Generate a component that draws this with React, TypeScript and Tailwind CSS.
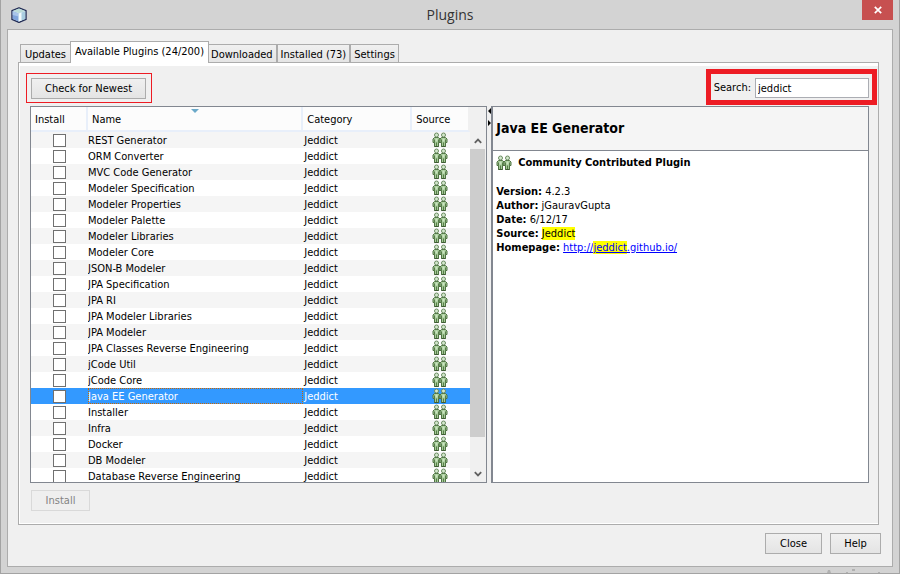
import React, { useState } from 'react';

const plugins = [
  'REST Generator',
  'ORM Converter',
  'MVC Code Generator',
  'Modeler Specification',
  'Modeler Properties',
  'Modeler Palette',
  'Modeler Libraries',
  'Modeler Core',
  'JSON-B Modeler',
  'JPA Specification',
  'JPA RI',
  'JPA Modeler Libraries',
  'JPA Modeler',
  'JPA Classes Reverse Engineering',
  'jCode Util',
  'jCode Core',
  'Java EE Generator',
  'Installer',
  'Infra',
  'Docker',
  'DB Modeler',
  'Database Reverse Engineering',
];

const details = [
  { label: 'Version:', value: '4.2.3' },
  { label: 'Author:', value: 'jGauravGupta' },
  { label: 'Date:', value: '6/12/17' },
];

const buttonStyle =
  'border border-[#acacac] bg-linear-to-b from-[#f0f0f0] to-[#e4e4e4] text-center leading-4';

function Person({ x }: { x: number }) {
  return (
    <g transform={`translate(${x} 0)`}>
      <path
        d="M2.500 5.500h4l1.500 1.500v3.500h-1.500v4h-4v-4H1V7z"
        fill="#a3c996"
        stroke="#4f7342"
        strokeWidth="1"
        strokeLinejoin="round"
      />
      <path d="M3.500 6.500h2v3h-2z" fill="#cbe4c1" />
      <path d="M2.500 7.500v3M6.500 7.500v3M4.500 10.500v4" stroke="#4f7342" strokeWidth="0.9" />
      <circle cx="4.500" cy="3" r="2" fill="#d3e8cd" stroke="#6c8c62" strokeWidth="1" />
      <path d="M2.500 14.500h4" stroke="#3f5c34" strokeWidth="1" />
    </g>
  );
}

function CommunityIcon() {
  return (
    <svg viewBox="0 0 16 16" className="block size-4 shrink-0" aria-hidden="true">
      <Person x={0} />
      <Person x={7} />
    </svg>
  );
}

function CubeIcon() {
  return (
    <svg viewBox="0 0 16 16" className="size-4" aria-hidden="true">
      <path d="M8 .8 15 3.600v8.800L8 15.400 1 12.400V3.600z" fill="#dcecf4" stroke="#232c55" strokeWidth="1.400" strokeLinejoin="round" />
      <path d="M8 1.500 14.200 3.900 8 6.300 1.800 3.900z" fill="#bcdcd8" />
      <path d="M1.700 4.200 7.700 6.500v8L1.700 12z" fill="#7fa4dc" />
      <path d="M1.700 4.200 7.700 6.500v3L1.700 8z" fill="#a9c5ea" />
      <path d="M7.700 6.500 14.300 4.200V12l-6.600 2.500z" fill="#a9cde0" />
      <path d="M7.700 6.500 10.500 5.500v8l-2.800 1z" fill="#f2fafc" />
    </svg>
  );
}

function Tab({ children, className }: { children: React.ReactNode; className: string }) {
  return (
    <button
      role="tab"
      aria-selected="false"
      className={`h-[18px] border border-b-0 border-[#acacac] bg-linear-to-b from-[#f0f0f0] to-[#e5e5e5] pt-0.5 leading-4 whitespace-nowrap ${className}`}
    >
      {children}
    </button>
  );
}

export default function App() {
  const [query, setQuery] = useState('jeddict');

  return (
    <div className="relative flex h-screen flex-col overflow-hidden border border-t-0 border-[#a3a3a3] bg-[#d3d3d3] px-1.5 pb-1.5 font-['DejaVu_Sans_Condensed','DejaVu_Sans',sans-serif] text-[11px] text-black">
      <header className="grid h-[29px] shrink-0 grid-cols-[1fr_auto_1fr] items-center">
        <span className="pl-1">
          <CubeIcon />
        </span>
        <h1 className="font-['Open_Sans',sans-serif] text-[14px] leading-5 text-[#333]">Plugins</h1>
        <button
          aria-label="Close window"
          className="flex h-5 w-[31px] items-center justify-center self-start justify-self-end bg-[#c75050]"
        >
          <svg viewBox="0 0 8 8" className="size-2" aria-hidden="true">
            <path d="M.8.8l6.400 6.400M7.200.8.8 7.200" stroke="#fff" strokeWidth="1.700" />
          </svg>
        </button>
      </header>

      <main className="flex min-h-0 flex-1 flex-col border border-[#acacac] bg-[#f0f0f0] pt-[11px] pr-[13px] pb-3 pl-2.5">
        <div role="tablist" className="flex shrink-0 items-end px-0.5">
          <Tab className="px-1">Updates</Tab>
          <button
            role="tab"
            aria-selected="true"
            className="z-10 -mr-0.5 -mb-px -ml-px h-[22px] border border-b-0 border-[#acacac] bg-white px-1 pb-0.5 leading-4 whitespace-nowrap"
          >
            Available Plugins (24/200)
          </button>
          <Tab className="px-[3px]">Downloaded</Tab>
          <Tab className="px-[3px]">Installed (73)</Tab>
          <Tab className="px-[3px]">Settings</Tab>
        </div>

        <section className="flex min-h-0 flex-1 flex-col border border-[#acacac] shadow-[inset_1px_3px_0_white,inset_0_-1px_0_white]">
          <div className="flex shrink-0 items-center justify-between pt-1.5 pr-px pl-[7px]">
            <div className="mb-0.5 self-end border border-[#ed1c24] pt-1 pr-[5px] pb-[3px] pl-1">
              <button className={`${buttonStyle} block h-[21px] w-[115px]`}>Check for Newest</button>
            </div>
            <div className="flex items-center gap-1 border-5 border-[#ed1c24] pt-1 pr-[3px] pb-0.5 pl-[3px]">
              <label htmlFor="search">Search:</label>
              <input
                id="search"
                value={query}
                onChange={(e) => setQuery(e.target.value)}
                className="h-5 w-[114px] border border-[#abadb3] bg-white px-0.5 leading-4 outline-none"
              />
            </div>
          </div>

          <div className="flex min-h-0 flex-1 pt-px pr-[9px] pl-[11px]">
            <div className="flex min-w-0 flex-[458] overflow-hidden border border-[#828790] bg-white">
              <div className="min-w-0 flex-1">
                <table className="w-full table-fixed border-separate border-spacing-0 text-left">
                  <colgroup>
                    <col className="w-[57px]" />
                    <col />
                    <col className="w-[109px]" />
                    <col className="w-[58px]" />
                  </colgroup>
                  <thead>
                    <tr className="h-[25px] bg-[#fcfcfc]">
                      <th className="border-r-2 border-b-2 border-[#e8effa] p-0 pt-1 pl-1 font-normal">Install</th>
                      <th className="relative border-r-2 border-b-2 border-[#e8effa] p-0 pt-1 pl-1 font-normal">
                        Name
                        <svg viewBox="0 0 8 4" className="absolute top-0.5 left-1/2 h-1 w-2 -translate-x-1/2" aria-hidden="true">
                          <path d="M0 0h8L4 4z" fill="#6ba9c9" />
                        </svg>
                      </th>
                      <th className="border-r-2 border-b-2 border-[#e8effa] p-0 pt-1 pl-1 font-normal">Category</th>
                      <th className="border-r-2 border-b-2 border-r-[#f0f0f0] border-b-[#e8effa] p-0 pt-1 pl-1 font-normal">Source</th>
                    </tr>
                  </thead>
                  <tbody>
                    {plugins.map((name, i) => {
                      const selected = name === 'Java EE Generator';
                      return (
                        <tr
                          key={name}
                          className={`h-4 leading-[15px] ${selected ? 'bg-[#3399ff] text-white' : i % 2 === 0 ? 'bg-[#f5f5f5]' : 'bg-white'}`}
                        >
                          <td className="p-0 pt-0.5 pb-px">
                            <input
                              type="checkbox"
                              aria-label={`Install ${name}`}
                              className="mx-auto block size-[13px] appearance-none border border-[#707070] bg-white"
                            />
                          </td>
                          <td className="p-0">
                            <div
                              className={`h-4 truncate pt-px leading-[15px] ${selected ? 'outline-1 -outline-offset-1 outline-dotted outline-[#cc6600]' : ''}`}
                            >
                              {name}
                            </div>
                          </td>
                          <td className="p-0 pt-px pl-px">Jeddict</td>
                          <td className="p-0 pl-5">
                            <CommunityIcon />
                          </td>
                        </tr>
                      );
                    })}
                  </tbody>
                </table>
              </div>
              <div className="flex w-4 shrink-0 flex-col bg-[#f0f0f0]">
                <div className="flex h-[42px] shrink-0 items-end justify-center pb-1">
                  <svg viewBox="0 0 8 8" className="size-2" aria-hidden="true">
                    <path d="M.8 5.800 4 2.600l3.200 3.200" fill="none" stroke="#606060" strokeWidth="1.800" />
                  </svg>
                </div>
                <div className="w-[15px] flex-[288] bg-[#cdcdcd]" />
                <div className="flex-[28]" />
                <div className="flex h-[17px] shrink-0 items-center justify-center">
                  <svg viewBox="0 0 8 8" className="size-2" aria-hidden="true">
                    <path d="M.8 2.200 4 5.400l3.200-3.200" fill="none" stroke="#606060" strokeWidth="1.800" />
                  </svg>
                </div>
              </div>
            </div>

            <div className="w-1 shrink-0 pt-0.5">
              <svg viewBox="0 0 4 20" className="h-5 w-1" aria-hidden="true">
                <path d="M4 0v6L1 3zM1 12v6l3-3z" fill="#000" />
              </svg>
            </div>

            <article className="flex min-w-0 flex-[377] flex-col border border-l-2 border-[#828790] bg-white">
              <h2 className="flex h-11 shrink-0 items-center border-b border-[#828790] bg-[#f5f5f5] pl-[3px] text-[14px] font-bold">
                Java EE Generator
              </h2>
              <div className="px-[3px] pt-1 leading-[14px]">
                <p className="flex items-center gap-1.5 pb-3.5 font-bold leading-4">
                  <CommunityIcon />
                  Community Contributed Plugin
                </p>
                {details.map((d) => (
                  <p key={d.label}>
                    <b>{d.label}</b> {d.value}
                  </p>
                ))}
                <p>
                  <b>Source:</b> <mark className="bg-[#ffff00]">Jeddict</mark>
                </p>
                <p>
                  <b>Homepage:</b>{' '}
                  <a href="http://jeddict.github.io/" className="text-[#0000ff] underline">
                    http://<mark className="bg-[#ffff00] text-[#0000ff]">jeddict</mark>.github.io/
                  </a>
                </p>
              </div>
            </article>
          </div>

          <div className="shrink-0 pt-[7px] pb-[13px] pl-3">
            <button disabled className="block h-[21px] w-[59px] border border-[#d9d9d9] bg-[#efefef] leading-4 text-[#838383]">
              Install
            </button>
          </div>
        </section>

        <footer className="-mr-0.5 flex shrink-0 justify-end gap-2 pt-2">
          <button className={`${buttonStyle} h-[21px] w-[57px]`}>Close</button>
          <button className={`${buttonStyle} h-[21px] w-[51px]`}>Help</button>
        </footer>
      </main>

      <svg viewBox="0 0 60 4" className="absolute right-3 bottom-0 h-1 w-[60px]" aria-hidden="true">
        <path d="M0 4l1-3h2l1 3zM25 0h3v2h-3zM19 3h2v1h-2zM51 3h2v1h-2z" fill="#b0b0b0" />
      </svg>
    </div>
  );
}
